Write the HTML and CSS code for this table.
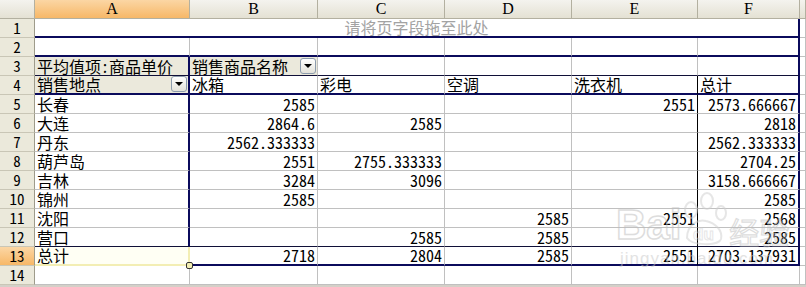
FILE: index.html
```html
<!DOCTYPE html>
<html>
<head>
<meta charset="utf-8">
<link rel="stylesheet" href="styles.css">
</head>
<body>
<div class="sheet">
  <div class="ch corner"></div>
  <div class="ch sel">A</div>
  <div class="ch">B</div>
  <div class="ch">C</div>
  <div class="ch">D</div>
  <div class="ch">E</div>
  <div class="ch">F</div>
  <div class="ch"></div>

  <div class="rh">1</div>
  <div class="c page">请将页字段拖至此处</div>
  <div class="c"></div>

  <div class="rh">2</div>
  <div class="c bbn"></div>
  <div class="c bbn"></div>
  <div class="c bbn"></div>
  <div class="c bbn"></div>
  <div class="c bbn"></div>
  <div class="c bbn brn"></div>
  <div class="c"></div>

  <div class="rh">3</div>
  <div class="c fld brn bbt">平均值项:商品单价</div>
  <div class="c fld bbt drop"><span>销售商品名称</span><span class="dd"></span></div>
  <div class="c bbt"></div>
  <div class="c bbt"></div>
  <div class="c bbt"></div>
  <div class="c bbt brn"></div>
  <div class="c"></div>

  <div class="rh">4</div>
  <div class="c fld brn bbn drop"><span>销售地点</span><span class="dd"></span></div>
  <div class="c bbn">冰箱</div>
  <div class="c bbn">彩电</div>
  <div class="c bbn">空调</div>
  <div class="c bbn brt">洗衣机</div>
  <div class="c bbn brn">总计</div>
  <div class="c"></div>

  <div class="rh">5</div>
  <div class="c brn">长春</div>
  <div class="c num">2585</div>
  <div class="c num"></div>
  <div class="c num"></div>
  <div class="c num brt">2551</div>
  <div class="c num brn">2573.666667</div>
  <div class="c"></div>

  <div class="rh">6</div>
  <div class="c brn">大连</div>
  <div class="c num">2864.6</div>
  <div class="c num">2585</div>
  <div class="c num"></div>
  <div class="c num brt"></div>
  <div class="c num brn">2818</div>
  <div class="c"></div>

  <div class="rh">7</div>
  <div class="c brn">丹东</div>
  <div class="c num">2562.333333</div>
  <div class="c num"></div>
  <div class="c num"></div>
  <div class="c num brt"></div>
  <div class="c num brn">2562.333333</div>
  <div class="c"></div>

  <div class="rh">8</div>
  <div class="c brn">葫芦岛</div>
  <div class="c num">2551</div>
  <div class="c num">2755.333333</div>
  <div class="c num"></div>
  <div class="c num brt"></div>
  <div class="c num brn">2704.25</div>
  <div class="c"></div>

  <div class="rh">9</div>
  <div class="c brn">吉林</div>
  <div class="c num">3284</div>
  <div class="c num">3096</div>
  <div class="c num"></div>
  <div class="c num brt"></div>
  <div class="c num brn">3158.666667</div>
  <div class="c"></div>

  <div class="rh">10</div>
  <div class="c brn">锦州</div>
  <div class="c num">2585</div>
  <div class="c num"></div>
  <div class="c num"></div>
  <div class="c num brt"></div>
  <div class="c num brn">2585</div>
  <div class="c"></div>

  <div class="rh">11</div>
  <div class="c brn">沈阳</div>
  <div class="c num"></div>
  <div class="c num"></div>
  <div class="c num">2585</div>
  <div class="c num brt">2551</div>
  <div class="c num brn">2568</div>
  <div class="c"></div>

  <div class="rh">12</div>
  <div class="c brn bbt">营口</div>
  <div class="c num bbt"></div>
  <div class="c num bbt">2585</div>
  <div class="c num bbt">2585</div>
  <div class="c num bbt brt"></div>
  <div class="c num bbt brn">2585</div>
  <div class="c"></div>

  <div class="rh sel">13</div>
  <div class="c active">总计<span class="handle"></span></div>
  <div class="c num bbn">2718</div>
  <div class="c num bbn">2804</div>
  <div class="c num bbn">2585</div>
  <div class="c num bbn brt">2551</div>
  <div class="c num bbn brn">2703.137931</div>
  <div class="c"></div>

  <div class="rh">14</div>
  <div class="c"></div>
  <div class="c"></div>
  <div class="c"></div>
  <div class="c"></div>
  <div class="c"></div>
  <div class="c"></div>
  <div class="c"></div>
</div>
<div class="wm">
  <div class="wm-top"><span class="wm-bai">Bai</span><svg class="wm-paw" width="46" height="56" viewBox="0 0 46 56"><g fill="none" stroke="#cfcfcf" stroke-width="2"><ellipse cx="9" cy="18" rx="6" ry="8"/><ellipse cx="25" cy="9" rx="6" ry="8"/><ellipse cx="39" cy="21" rx="5" ry="7"/><path d="M5 46 C5 32 17 27 24 29 C33 31 41 38 39 47 C37 54 10 54 5 46 Z"/></g><text x="11" y="48" font-family="Liberation Sans" font-weight="bold" font-size="17" fill="none" stroke="#cfcfcf">du</text></svg><span class="wm-jy">经验</span></div>
  <div class="wm-url">jingyan.baidu.com</div>
</div>
</body>
</html>
```
FILE: styles.css
```css
html, body {
  margin: 0;
  padding: 0;
}
body {
  width: 806px;
  height: 287px;
  background: #d4d0c8;
  overflow: hidden;
  position: relative;
  font-family: "Noto Sans Mono CJK SC", "Noto Sans CJK SC", "DejaVu Sans Mono", monospace;
  font-size: 16px;
  color: #000;
}
.sheet {
  display: grid;
  grid-template-columns: 35px 155px 128px 127px 127px 126px 102px 6px;
  grid-auto-rows: 19px;
  background: #fff;
}
.ch, .rh {
  box-sizing: border-box;
  background: linear-gradient(#f4f3ee, #e4e1d3);
  border-right: 1px solid #b3b0a0;
  border-bottom: 1px solid #b3b0a0;
  display: flex;
  align-items: center;
  justify-content: center;
  line-height: 18px;
  font-size: 15px;
}
.ch {
  font-family: "Liberation Serif", serif;
  font-size: 16px;
}
.rh {
  background: #ebe9db;
  border-bottom: 1px solid #c9c6b6;
  border-right: 1px solid #9e9b8b;
}
.ch.sel, .rh.sel {
  background: linear-gradient(#fbd6a4, #f7b868);
}
.c {
  box-sizing: border-box;
  border-right: 1px solid #c0c0c0;
  border-bottom: 1px solid #c0c0c0;
  padding: 0 2px;
  line-height: 18px;
  white-space: nowrap;
  display: flex;
  align-items: flex-end;
}
.num {
  justify-content: flex-end;
}
.page {
  grid-column: span 6;
  justify-content: center;
  color: #a3a3a3;
  border-bottom: 2px solid #0b0b5c;
  border-right: 2px solid #0b0b5c;
  align-items: flex-start;
  line-height: 16px;
}
.fld {
  background: #ebe9dc;
}
.drop {
  justify-content: space-between;
  padding-right: 1px;
}
.dd {
  box-sizing: border-box;
  width: 16px;
  height: 16px;
  margin-bottom: 1px;
  border: 1px solid #8d9cad;
  border-radius: 3px;
  background: linear-gradient(#ffffff, #e3e2da);
  display: flex;
  align-items: center;
  justify-content: center;
  flex: none;
}
.dd::after {
  content: "";
  border-left: 4px solid transparent;
  border-right: 4px solid transparent;
  border-top: 4px solid #000;
}
.bbn {
  border-bottom: 2px solid #0b0b5c;
}
.bbt {
  border-bottom: 1px solid #101038;
}
.brn {
  border-right: 2px solid #0b0b5c;
}
.brt {
  border-right: 1px solid #000;
}
.active {
  position: relative;
  background: #fffff4;
  border-right: 2px solid #f3eeb4;
  border-bottom: 2px solid #f3eeb4;
}
.handle {
  position: absolute;
  right: -5px;
  bottom: -5px;
  width: 5px;
  height: 5px;
  border: 1px solid #333;
  border-radius: 2px;
  background: #f3eeb4;
  z-index: 2;
}
.wm {
  position: absolute;
  left: 616px;
  top: 188px;
  width: 190px;
  opacity: 0.5;
  pointer-events: none;
}
.wm-top {
  display: flex;
  align-items: flex-end;
  gap: 1px;
  height: 60px;
}
.wm-bai {
  font-family: "Liberation Sans", sans-serif;
  font-weight: bold;
  font-size: 42px;
  line-height: 42px;
  color: transparent;
  -webkit-text-stroke: 1.5px #bdbdbd;
  margin-bottom: 2px;
}
.wm-jy {
  font-family: "Noto Sans CJK SC", sans-serif;
  font-size: 30px;
  line-height: 34px;
  color: transparent;
  -webkit-text-stroke: 1.2px #bdbdbd;
}
.wm-url {
  font-family: "Liberation Sans", sans-serif;
  font-size: 17px;
  color: #c8c8c8;
  letter-spacing: 1px;
  margin-top: 1px;
  padding-left: 4px;
}
```
